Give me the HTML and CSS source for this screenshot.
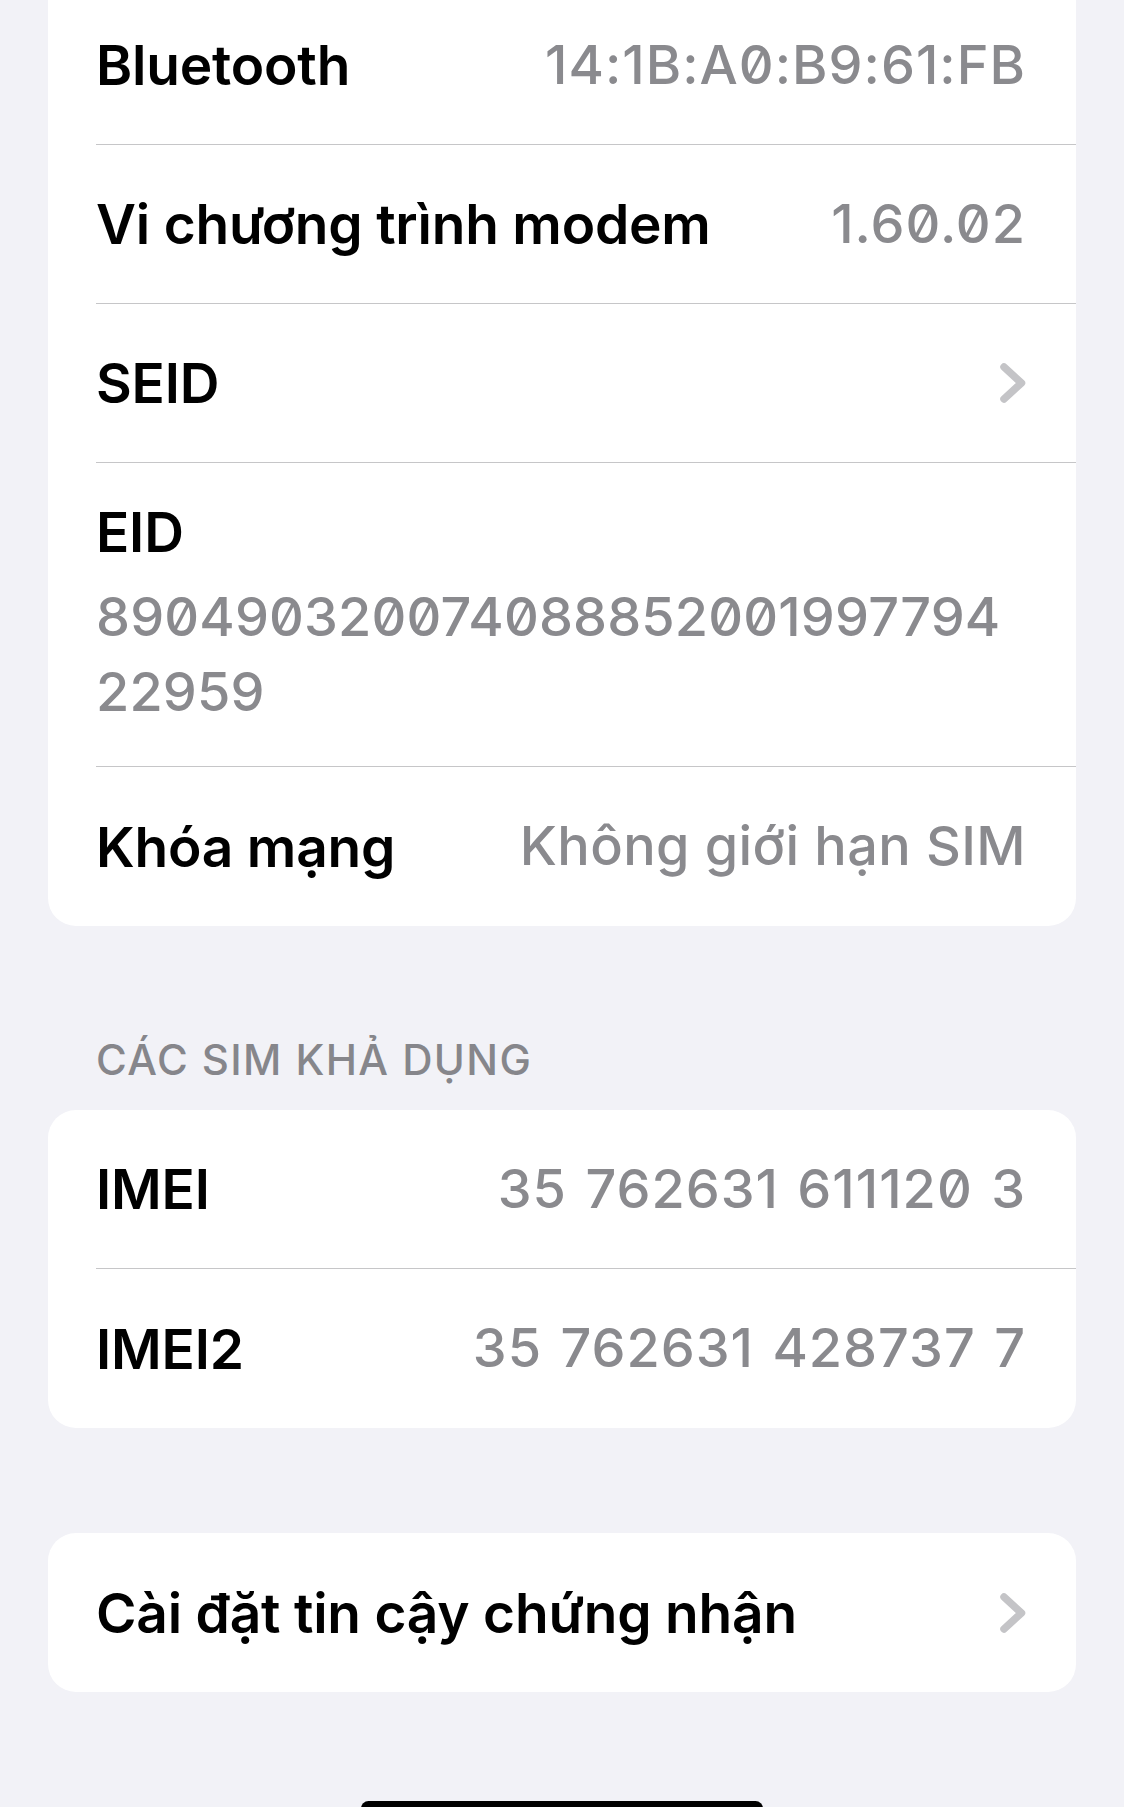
FILE: index.html
```html
<!DOCTYPE html>
<html lang="vi">
<head>
<meta charset="utf-8">
<title>Giới thiệu</title>
<link rel="stylesheet" href="styles.css">
</head>
<body>
<main class="screen">
  <section class="group group-first">
    <div class="row"><div class="row-inner"><span class="label">Bluetooth</span><span class="value">14:1B:A0:B9:61:FB</span></div></div>
    <div class="row"><div class="row-inner"><span class="label">Vi chương trình modem</span><span class="value">1.60.02</span></div></div>
    <div class="row"><div class="row-inner"><span class="label">SEID</span><svg class="chevron" viewBox="0 0 27 42" width="27" height="42" aria-hidden="true"><path d="M5 5 L22.5 21 L5 37" fill="none" stroke="#c4c4c7" stroke-width="7.5" stroke-linecap="round" stroke-linejoin="round"/></svg></div></div>
    <div class="row"><div class="row-inner stacked"><span class="label">EID</span><span class="value value-block"><span class="value-line">890490320074088852001997794</span><span class="value-line">22959</span></span></div></div>
    <div class="row"><div class="row-inner"><span class="label">Khóa mạng</span><span class="value value-text">Không giới hạn SIM</span></div></div>
  </section>

  <h2 class="section-header">CÁC SIM KHẢ DỤNG</h2>
  <section class="group">
    <div class="row"><div class="row-inner"><span class="label">IMEI</span><span class="value value-imei">35 762631 611120 3</span></div></div>
    <div class="row"><div class="row-inner"><span class="label">IMEI2</span><span class="value value-imei">35 762631 428737 7</span></div></div>
  </section>

  <section class="group group-cert">
    <div class="row"><div class="row-inner"><span class="label">Cài đặt tin cậy chứng nhận</span><svg class="chevron" viewBox="0 0 27 42" width="27" height="42" aria-hidden="true"><path d="M5 5 L22.5 21 L5 37" fill="none" stroke="#c4c4c7" stroke-width="7.5" stroke-linecap="round" stroke-linejoin="round"/></svg></div></div>
  </section>

  <div class="home-indicator"></div>
</main>
</body>
</html>
```
FILE: styles.css
```css
* { box-sizing: border-box; }
html, body { margin: 0; padding: 0; }
body {
  background: #f2f2f7;
  font-family: Inter, "Noto Sans", "Liberation Sans", sans-serif;
  color: #000;
  height: 1807px;
  overflow: hidden;
}
.screen {
  display: flex;
  flex-direction: column;
  padding: 0 48px;
}
.group {
  background: #fff;
  border-radius: 28px;
  overflow: hidden;
}
.group-first {
  margin-top: -14px;
  border-radius: 0 0 28px 28px;
}
.row { padding-left: 48px; }
.row-inner {
  display: flex;
  align-items: center;
  justify-content: space-between;
  gap: 24px;
  height: 159px;
  padding-right: 50px;
  border-bottom: 1px solid #c6c6c8;
}
.row:last-child .row-inner { border-bottom: none; }
.label {
  font-size: 55px;
  line-height: 1.2;
  font-weight: 600;
  letter-spacing: -0.2px;
  white-space: nowrap;
}
.value {
  font-size: 54px;
  line-height: 1.2;
  font-weight: 500;
  color: #8a8a8e;
  letter-spacing: 1px;
  font-feature-settings: "zero" 1;
  white-space: nowrap;
}
.value-text { letter-spacing: 0.4px; }
.value-imei { word-spacing: 3px; }
.chevron { flex: none; display: block; }
.row-inner.stacked {
  flex-direction: column;
  align-items: flex-start;
  justify-content: flex-start;
  gap: 0;
  height: 304px;
  padding-top: 36px;
}
.value-block {
  display: flex;
  flex-direction: column;
  margin-top: 14px;
  line-height: 75px;
  letter-spacing: 0.15px;
}
.section-header {
  margin: 110px 0 26px 48px;
  font-size: 42px;
  line-height: 48px;
  font-weight: 500;
  letter-spacing: 1.4px;
  color: #86868b;
}
.group-cert { margin-top: 105px; }
.home-indicator {
  align-self: center;
  width: 402px;
  height: 15px;
  margin-top: 109px;
  border-radius: 8px;
  background: #000;
}
```
